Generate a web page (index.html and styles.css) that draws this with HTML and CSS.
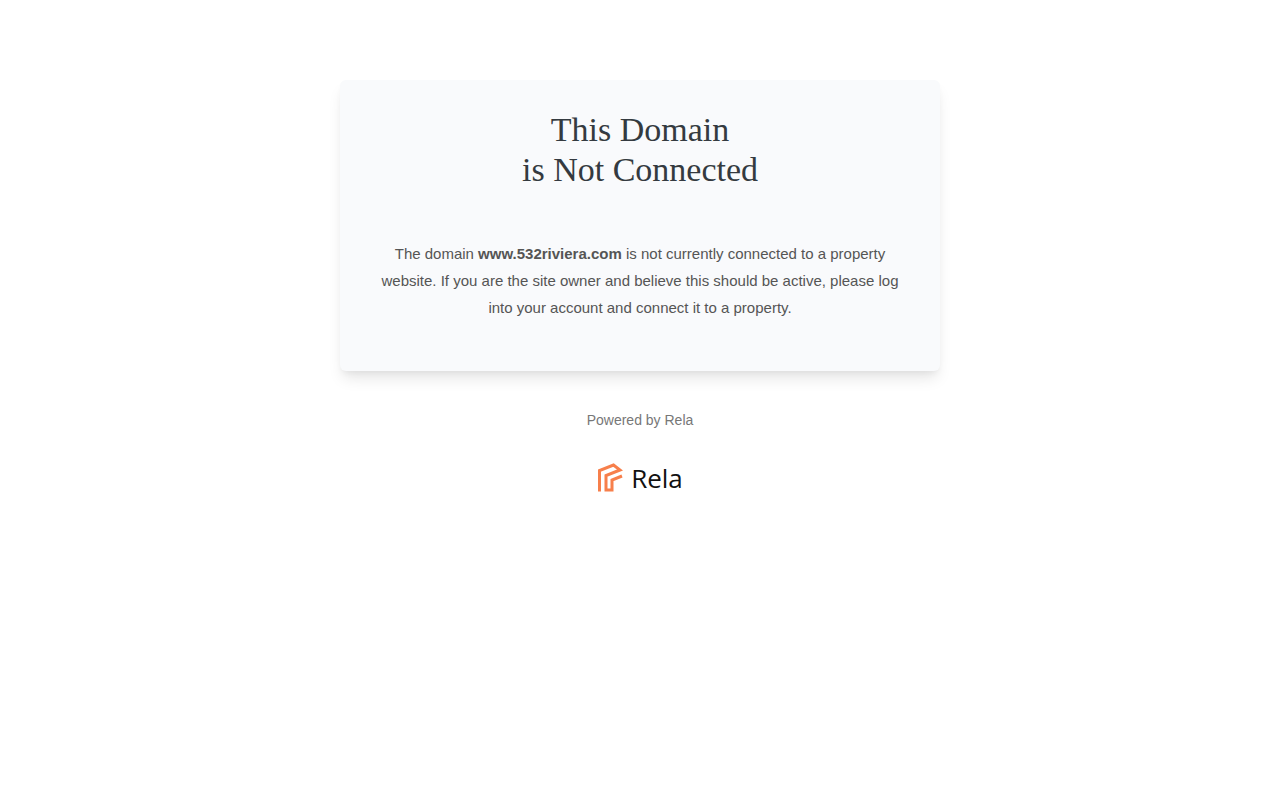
FILE: index.html
```html
<!DOCTYPE html>
<html lang="en">
<head>
  <meta charset="UTF-8">
  <meta name="viewport" content="width=device-width, initial-scale=1.0">
  <title>This Domain is Not Connected</title>
  <link rel="stylesheet" href="styles.css">
</head>
<body>

<main class="card">
  <h1>This Domain<br>is Not Connected</h1>
  <p>The domain <strong>www.532riviera.com</strong> is not currently connected to a property website. If you are the site owner and believe this should be active, please log into your account and connect it to a property.</p>
</main>

<footer>
  <p>Powered by Rela</p>
  <div class="logo">
    <svg width="26" height="30" viewBox="0 0 26 30" fill="none" stroke="#f77f4b" stroke-width="3" aria-hidden="true">
      <path d="M2.5 28.5V7.5L16.5 2L23 7L9 12.5V27H15V17L25 13" />
    </svg>
    <span>Rela</span>
  </div>
</footer>

</body>
</html>
```

FILE: styles.css
```css
* { box-sizing: border-box; margin: 0; padding: 0; }

body {
  background: #fff;
  font-family: "Liberation Sans", Arial, sans-serif;
  text-align: center;
  padding: 80px 20px 20px;
}

.card {
  max-width: 600px;
  margin: 0 auto;
  padding: 30px 40px 50px;
  background: #f9fafc;
  border-radius: 6px;
  box-shadow: 0 10px 15px -3px rgba(0, 0, 0, 0.1), 0 4px 6px -2px rgba(0, 0, 0, 0.05);
}

.card h1 {
  margin-bottom: 50px;
  color: #343a40;
  font-family: "Liberation Serif", "Times New Roman", serif;
  font-size: 34px;
  font-weight: 400;
  line-height: 40px;
}

.card p {
  color: #555;
  font-size: 15px;
  line-height: 27px;
}

footer {
  margin-top: 40px;
}

footer p {
  color: #777;
  font-size: 14px;
  line-height: 18px;
}

.logo {
  display: flex;
  justify-content: center;
  align-items: center;
  gap: 8px;
  margin-top: 30px;
}

.logo span {
  color: #111;
  font-family: "Open Sans", sans-serif;
  font-size: 26px;
  line-height: 38px;
}
```
